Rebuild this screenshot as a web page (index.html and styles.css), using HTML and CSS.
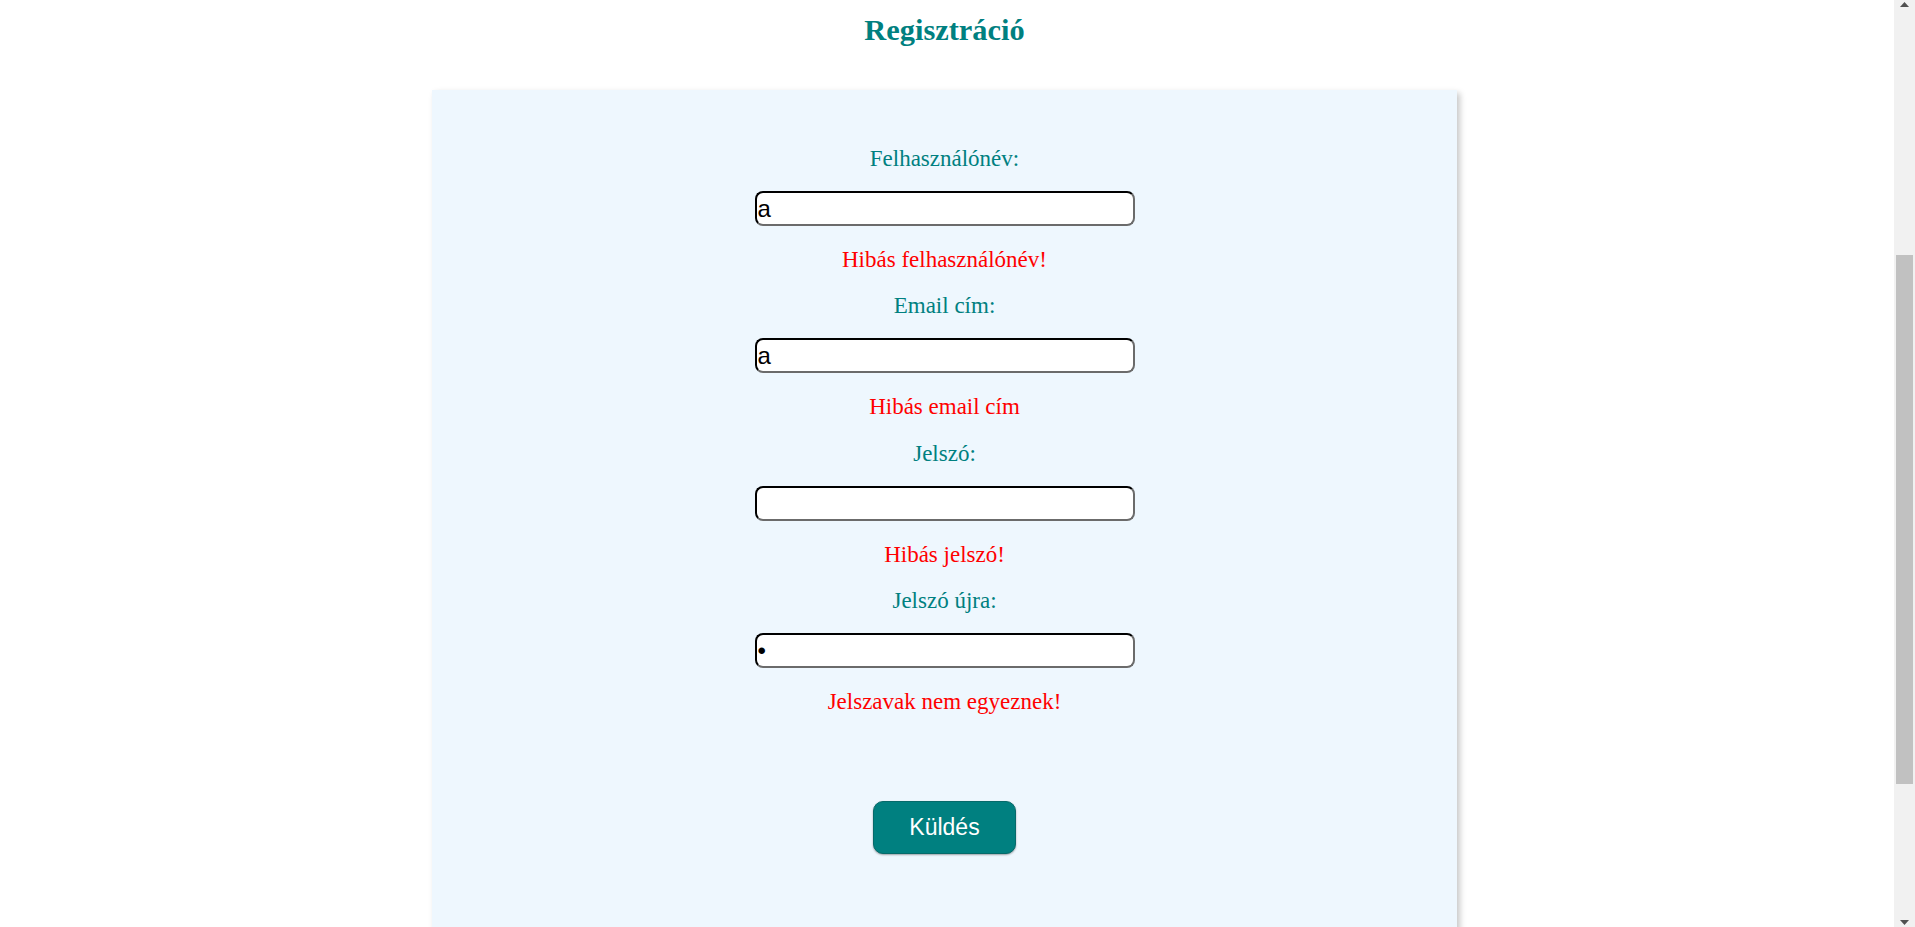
FILE: index.html
```html
<!DOCTYPE html>
<html lang="hu">
<head>
<meta charset="utf-8">
<title>Regisztráció</title>
<link rel="stylesheet" href="styles.css">
</head>
<body>
<div class="page">
  <h1 class="title">Regisztráció</h1>
  <form class="card" onsubmit="return false;">
    <label class="label" for="user">Felhasználónév:</label>
    <input class="field" id="user" type="text" value="a">
    <div class="error">Hibás felhasználónév!</div>

    <label class="label" for="email">Email cím:</label>
    <input class="field" id="email" type="text" value="a">
    <div class="error">Hibás email cím</div>

    <label class="label" for="pw">Jelszó:</label>
    <input class="field" id="pw" type="password" value="">
    <div class="error">Hibás jelszó!</div>

    <label class="label" for="pw2">Jelszó újra:</label>
    <input class="field" id="pw2" type="password" value="a">
    <div class="error error-last">Jelszavak nem egyeznek!</div>

    <button class="submit" type="submit">Küldés</button>
  </form>
</div>
<div class="scrollbar" aria-hidden="true">
  <div class="sb-btn sb-up">
    <svg width="9" height="5" viewBox="0 0 9 5"><polygon points="0,5 9,5 4.5,0" fill="#505050"/></svg>
  </div>
  <div class="sb-track">
    <div class="sb-thumb"></div>
  </div>
  <div class="sb-btn sb-down">
    <svg width="9" height="5" viewBox="0 0 9 5"><polygon points="0,0 9,0 4.5,5" fill="#505050"/></svg>
  </div>
</div>
<script src="script.js"></script>
</body>
</html>
```

FILE: styles.css
```css
html, body {
  margin: 0;
  padding: 0;
  background: #ffffff;
}

.page {
  box-sizing: border-box;
  min-height: 1565px;
  padding: 430px 26px 0 0;
  display: flex;
  flex-direction: column;
  align-items: center;
  font-family: "Liberation Serif", "Times New Roman", serif;
}

.title {
  margin: 0 0 42px 0;
  font-size: 30.4px;
  line-height: 35px;
  font-weight: bold;
  color: #008080;
}

.card {
  box-sizing: border-box;
  width: 1025px;
  height: 1000px;
  padding-top: 55px;
  background: #eef7fe;
  box-shadow: 3px 3px 6px rgba(0, 0, 0, 0.22);
  display: flex;
  flex-direction: column;
  align-items: center;
}

.label {
  font-size: 23px;
  line-height: 26px;
  padding-top: 1px;
  color: #008080;
  margin-bottom: 19px;
}

.field {
  box-sizing: border-box;
  width: 380px;
  height: 35px;
  margin: 0 0 20px 0;
  padding: 0 1px;
  border: 2px inset #767676;
  border-top-color: #1a1a1a;
  border-left-color: #1a1a1a;
  border-right-color: #6b6b6b;
  border-bottom-color: #6b6b6b;
  border-radius: 8px;
  background: #ffffff;
  font-family: "Liberation Sans", Arial, sans-serif;
  font-size: 24px;
  color: #000000;
  outline: none;
}

.error {
  font-size: 23px;
  line-height: 26px;
  padding-top: 1px;
  color: #ff0000;
  margin-bottom: 19.4px;
}

.error-last {
  margin-bottom: 86px;
}

.submit {
  box-sizing: border-box;
  width: 143px;
  height: 53px;
  border: 1px solid #066a6a;
  border-radius: 10px;
  background: #008080;
  color: #ffffff;
  font-family: "Liberation Sans", Arial, sans-serif;
  font-size: 23px;
  box-shadow: 0 1px 2px rgba(0, 0, 0, 0.35);
  cursor: pointer;
}

/* fake classic scrollbar overlay */
.scrollbar {
  position: fixed;
  top: 0;
  right: 0;
  bottom: 0;
  width: 21px;
  background: #f1f1f1;
  display: flex;
  flex-direction: column;
}

.sb-btn {
  box-sizing: border-box;
  height: 17px;
  display: flex;
  justify-content: center;
  flex: none;
}

.sb-up {
  align-items: flex-start;
  padding-top: 2px;
}

.sb-down {
  align-items: flex-end;
  padding-bottom: 2px;
}

.sb-btn svg {
  display: block;
}

.sb-track {
  flex: 1;
  padding: 238px 2px 0 2px;
}

.sb-thumb {
  height: 529px;
  background: #c1c1c1;
}
```

FILE: script.js
```js
function scrollPage() {
  window.scrollTo(0, 417);
}
scrollPage();
window.addEventListener('load', scrollPage);
```
